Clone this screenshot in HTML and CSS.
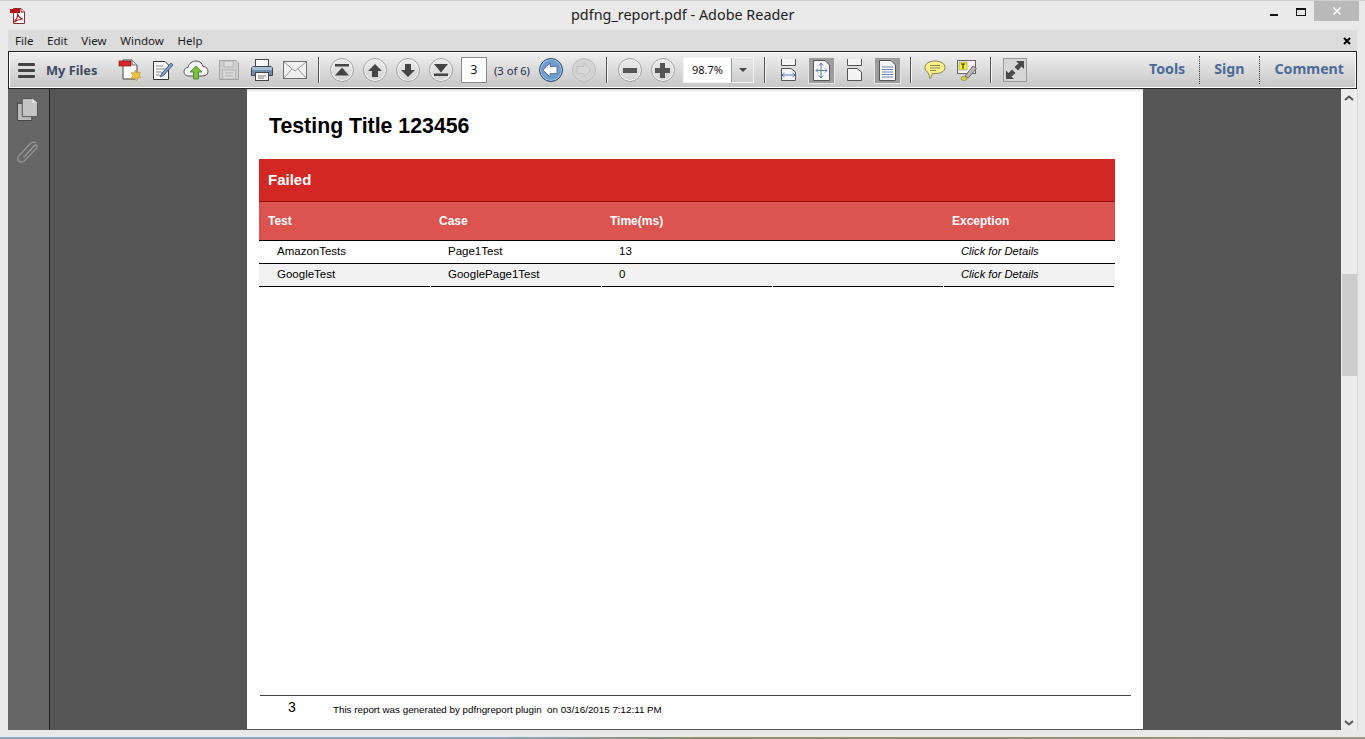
FILE: index.html
```html
<!DOCTYPE html>
<html lang="en">

<head>
  <meta charset="UTF-8">
  <title>pdfng_report.pdf - Adobe Reader</title>
  <link rel="stylesheet" href="styles.css">
</head>

<body>
  <div class="window">
    <div class="titlebar">
      <svg class="app-icon" width="18" height="18" viewBox="0 0 18 18">
        <path d="M4.500 1.500H12L15.500 5V16.500H4.500Z" fill="#fff" stroke="#8c2a2c" />
        <path d="M12 1.500V5H15.500" fill="#eee" stroke="#8c2a2c" />
        <rect x="1" y="2" width="10" height="4" fill="#b3151b" />
        <path d="M5 15C8 12 9 9 8.500 6.500C9.500 10 11 11.500 14 12C11 12 8 13 5 15Z" fill="none" stroke="#c2272d" stroke-width="1.200" />
      </svg>
      <div class="title">pdfng_report.pdf - Adobe Reader</div>
      <div class="winbtns">
        <svg width="10" height="3" viewBox="0 0 10 3" class="win-min"><rect width="8" height="2" y="1" fill="#111" /></svg>
        <svg width="11" height="9" viewBox="0 0 11 9" class="win-max"><rect x=".5" y=".5" width="9" height="7" fill="none" stroke="#111" /><rect x="0" y="0" width="10" height="2" fill="#111" /></svg>
        <div class="win-close">
          <svg width="10" height="10" viewBox="0 0 10 10"><path d="M1.500 1.500L8.500 8.500M8.500 1.500L1.500 8.500" stroke="#fff" stroke-width="1.600" /></svg>
        </div>
      </div>
    </div>

    <div class="menubar">
      <span>File</span>
      <span>Edit</span>
      <span>View</span>
      <span>Window</span>
      <span>Help</span>
      <svg class="menu-close" width="8" height="8" viewBox="0 0 8 8"><path d="M1 1L7 7M7 1L1 7" stroke="#000" stroke-width="2" /></svg>
    </div>

    <div class="toolbar">
      <svg class="burger" width="17" height="16" viewBox="0 0 17 16">
        <rect y="1" width="17" height="3" rx="1" fill="#444" />
        <rect y="7" width="17" height="3" rx="1" fill="#444" />
        <rect y="13" width="17" height="3" rx="1" fill="#444" />
      </svg>
      <div class="myfiles">My Files</div>

      <div class="group">
        <div class="tool">
          <svg width="24" height="26" viewBox="0 0 24 26">
            <path d="M5 3H14L19 8V22H5Z" fill="#fafafa" stroke="#444" />
            <path d="M14 3V8H19" fill="#ddd" stroke="#777" />
            <rect x="1" y="4" width="12" height="5" fill="#d8252b" stroke="#8a1a1e" stroke-width=".7" />
            <path d="M17.500 13L19 16L22.500 15L21 18L23 20.500L20 20.500L18.500 24L16.500 21L13 21.500L15 18.500L13 15.500L16 16Z" fill="#f0c23c" stroke="#b8902a" stroke-width=".6" />
          </svg>
        </div>
        <div class="tool">
          <svg width="22" height="24" viewBox="0 0 22 24">
            <path d="M1.500 3.500H13L16.500 7V21.500H1.500Z" fill="#fbfbfb" stroke="#333" />
            <path d="M4 8H11M4 11H13M4 14H10M4 17H8" stroke="#888" />
            <path d="M8 19L10 15L19 5L21 7L12 17Z" fill="#7d9bc4" stroke="#35517a" stroke-width=".8" />
          </svg>
        </div>
        <div class="tool">
          <svg width="26" height="22" viewBox="0 0 26 22">
            <path d="M6 17C2 17 1 14.500 1 12.500C1 10 3 8.500 5 8.500C6 4 9.500 2 13 2C17 2 19.500 4.500 20 7.500C23 7.500 25 9.500 25 12.500C25 15 23 17 20 17Z" fill="#f2f2f2" stroke="#555" />
            <path d="M13 7L19 13H15.500V20H10.500V13H7Z" fill="#7cc242" stroke="#3f7d1c" stroke-width=".8" />
          </svg>
        </div>
        <div class="tool">
          <svg width="20" height="20" viewBox="0 0 20 20">
            <path d="M.5 .5H17L19.500 3V19.500H.5Z" fill="#cfcfcf" stroke="#a2a2a2" />
            <rect x="5" y="1" width="9" height="6" fill="#dcdcdc" stroke="#a8a8a8" stroke-width=".7" />
            <rect x="3.500" y="10" width="13" height="9" fill="#d8d8d8" stroke="#a8a8a8" stroke-width=".7" />
            <path d="M6 13H14M6 16H14" stroke="#b0b0b0" />
          </svg>
        </div>
        <div class="tool">
          <svg width="24" height="24" viewBox="0 0 24 24">
            <rect x="5.500" y="1.500" width="13" height="8" fill="#fafafa" stroke="#444" />
            <path d="M1.500 11C1.500 9 3 8.500 4 8.500H20C21.500 8.500 22.500 9 22.500 11V17.500H1.500Z" fill="#6e8cab" stroke="#444" />
            <rect x="2" y="9" width="20" height="3" fill="#a6bed6" />
            <rect x="5.500" y="14.500" width="13" height="8" fill="#fafafa" stroke="#444" />
            <path d="M8 18H16M8 20H14" stroke="#777" />
          </svg>
        </div>
        <div class="tool">
          <svg width="24" height="18" viewBox="0 0 24 18">
            <rect x=".5" y=".5" width="23" height="17" fill="#f0f0f0" stroke="#707070" />
            <path d="M1 1L12 10L23 1M1 17L9 8M23 17L15 8" fill="none" stroke="#999" />
          </svg>
        </div>
      </div>

      <div class="sep sep-a"></div>

      <div class="group">
        <div class="tool"><span class="round">
          <svg width="14" height="12" viewBox="0 0 14 12"><rect y="0" width="14" height="2.500" fill="#444" /><path d="M7 3.500L14 11.500H0Z" fill="#444" /></svg>
        </span></div>
        <div class="tool"><span class="round">
          <svg width="14" height="13" viewBox="0 0 14 13"><path d="M7 0L14 7H10V13H4V7H0Z" fill="#444" /></svg>
        </span></div>
        <div class="tool"><span class="round">
          <svg width="14" height="13" viewBox="0 0 14 13"><path d="M7 13L14 6H10V0H4V6H0Z" fill="#444" /></svg>
        </span></div>
        <div class="tool"><span class="round">
          <svg width="14" height="12" viewBox="0 0 14 12"><path d="M7 8.500L14 0H0Z" fill="#444" /><rect y="9.500" width="14" height="2.500" fill="#444" /></svg>
        </span></div>
      </div>

      <div class="pagebox">3</div>
      <div class="pagecount">(3 of 6)</div>

      <div class="group group-history">
        <div class="tool"><span class="round round-blue">
          <svg width="15" height="14" viewBox="0 0 15 14"><path d="M0 7L7 0V3.500H14V10.500H7V14Z" fill="#fff" stroke="#2e4a70" stroke-width=".6" /></svg>
        </span></div>
        <div class="tool"><span class="round round-off">
          <svg width="15" height="14" viewBox="0 0 15 14"><path d="M15 7L8 0V3.500H1V10.500H8V14Z" fill="#d8d8d8" stroke="#b5b5b5" stroke-width=".6" /></svg>
        </span></div>
      </div>

      <div class="sep sep-b"></div>

      <div class="group">
        <div class="tool"><span class="round">
          <svg width="14" height="5" viewBox="0 0 14 5"><rect width="14" height="5" fill="#555" /></svg>
        </span></div>
        <div class="tool"><span class="round">
          <svg width="15" height="15" viewBox="0 0 15 15"><path d="M5 0H10V5H15V10H10V15H5V10H0V5H5Z" fill="#555" /></svg>
        </span></div>
      </div>

      <div class="zoombox">
        <div class="zoomval">98.7%</div>
        <div class="zoomdrop"><span class="caret"></span></div>
      </div>

      <div class="sep sep-c"></div>

      <div class="group">
        <div class="tool">
          <svg width="17" height="22" viewBox="0 0 17 22">
            <path d="M1.500 0V6.500H15.500V0" fill="#f4f4f4" stroke="#555" />
            <path d="M1.500 21.500V9.500H11L15.500 13V21.500Z" fill="#f4f4f4" stroke="#555" />
            <path d="M2 16H15M2 16L4.500 14M2 16L4.500 18M15 16L12.500 14M15 16L12.500 18" fill="none" stroke="#5f7fb0" />
          </svg>
        </div>
        <div class="tool"><span class="active">
          <svg width="17" height="21" viewBox="0 0 17 21">
            <path d="M.5 .5H12L16.500 5V20.500H.5Z" fill="#f6f6f6" stroke="#555" />
            <path d="M8 3V18M3 10.500H14M8 3L6 5.500M8 3L10 5.500M8 18L6 15.500M8 18L10 15.500M3 10.500L5 8.500M3 10.500L5 12.500M14 10.500L12 8.500M14 10.500L12 12.500" fill="none" stroke="#5f7fb0" />
          </svg>
        </span></div>
        <div class="tool">
          <svg width="17" height="22" viewBox="0 0 17 22">
            <path d="M1.500 0V6.500H15.500V0" fill="#f4f4f4" stroke="#555" />
            <path d="M1.500 21.500V9.500H11L15.500 13V21.500Z" fill="#f4f4f4" stroke="#555" />
          </svg>
        </div>
        <div class="tool"><span class="active">
          <svg width="17" height="21" viewBox="0 0 17 21">
            <path d="M.5 .5H12L16.500 5V20.500H.5Z" fill="#f6f6f6" stroke="#555" />
            <path d="M3 7H14M3 9.500H14M3 12H14M3 14.500H14M3 17H14" stroke="#6a86b8" />
          </svg>
        </span></div>
      </div>

      <div class="sep sep-d"></div>

      <div class="group">
        <div class="tool">
          <svg width="22" height="20" viewBox="0 0 22 20">
            <path d="M11 1C16.500 1 21 3.500 21 7.500C21 11.500 16.500 13.500 11 13.500C10 13.500 9 13.500 8 13.300C8 15 7.500 17 6 18.500C5.500 16.500 5 14.500 4 12.500C2 11.500 1 9.500 1 7.500C1 3.500 5.500 1 11 1Z" fill="#fbf08a" stroke="#8a8650" />
            <path d="M6 5.500H16M6 8H16M6 10.500H12" stroke="#8a8650" />
          </svg>
        </div>
        <div class="tool">
          <svg width="22" height="21" viewBox="0 0 22 21">
            <rect x=".5" y=".5" width="18" height="13" fill="#f4f4f4" stroke="#666" />
            <rect x="2" y="2" width="8" height="8" fill="#f7f12b" stroke="#777" stroke-width=".5" />
            <path d="M4 4H8M6 4V9" stroke="#222" />
            <path d="M8 16L16 6L19.500 8.500L11 18Z" fill="#b9b9b9" stroke="#666" />
            <ellipse cx="7" cy="18.500" rx="3" ry="2" fill="#d9cf4c" stroke="#827a22" stroke-width=".6" />
          </svg>
        </div>
      </div>

      <div class="sep sep-d"></div>

      <div class="tool">
        <span class="fullscreen">
          <svg width="20" height="20" viewBox="0 0 20 20">
            <path d="M11 1H19V9L16.500 6.500L13 10.500L9.500 7L13.500 3.500Z" fill="#4a4a4a" />
            <path d="M1 10.500L3.500 13L7 9.500L10.500 13L6.500 16.500L9 19H1Z" fill="#4a4a4a" />
          </svg>
        </span>
      </div>

      <div class="panels">
        <span class="panel-name panel-tools"><span class="panel-text">Tools</span></span>
        <span class="panel-name panel-sign"><span class="panel-text">Sign</span></span>
        <span class="panel-name panel-comment"><span class="panel-text">Comment</span></span>
      </div>
    </div>

    <div class="main">
      <div class="navpane">
        <svg width="21" height="23" viewBox="0 0 22 24">
          <rect x=".5" y="5.500" width="15" height="18" fill="#bdbdbd" stroke="#444" />
          <path d="M5.500 .5H16L21.500 5V19.500H5.500Z" fill="#c4c4c4" stroke="#505050" />
          <path d="M16 .5V5H21.500" fill="#e2e2e2" />
        </svg>
        <svg width="22" height="23" viewBox="0 0 23 24">
          <path d="M7 17L18 5C19.500 3.500 21 4 21 6C21 7 20.500 7.500 20 8L8 20.500C6 22.500 2.500 22.500 1.500 20.500C.5 18.500 1 16.500 2.500 15L13.500 3C15.500 1 18.500 .5 20 2" fill="none" stroke="#9a9a9a" stroke-width="1.300" />
        </svg>
      </div>

      <div class="canvas">
        <div class="page">
          <h1 class="doc-title">Testing Title 123456</h1>

          <table class="results">
            <colgroup>
              <col>
              <col>
              <col>
              <col>
              <col class="col-last">
            </colgroup>
            <thead>
              <tr class="band">
                <th colspan="5">Failed</th>
              </tr>
              <tr class="cols">
                <th>Test</th>
                <th>Case</th>
                <th>Time(ms)</th>
                <th></th>
                <th>Exception</th>
              </tr>
            </thead>
            <tbody>
              <tr>
                <td>AmazonTests</td>
                <td>Page1Test</td>
                <td>13</td>
                <td></td>
                <td class="details">Click for Details</td>
              </tr>
              <tr class="alt">
                <td>GoogleTest</td>
                <td>GooglePage1Test</td>
                <td>0</td>
                <td></td>
                <td class="details">Click for Details</td>
              </tr>
            </tbody>
          </table>

          <div class="doc-footer">
            <span class="page-no">3</span>
            <span class="generated">This report was generated by pdfngreport plugin&nbsp; on 03/16/2015 7:12:11 PM</span>
          </div>
        </div>
      </div>

      <div class="scrollbar">
        <svg width="10" height="6" viewBox="0 0 10 6"><path d="M1 5L5 1.500L9 5" fill="none" stroke="#555" stroke-width="2" /></svg>
        <div class="thumb"></div>
        <svg class="arrow-down" width="10" height="6" viewBox="0 0 10 6"><path d="M1 1L5 4.500L9 1" fill="none" stroke="#555" stroke-width="2" /></svg>
      </div>
    </div>

    <div class="statusgap"></div>
    <div class="desktop"></div>
  </div>
</body>

</html>
```

FILE: styles.css
```css
* {
  box-sizing: border-box;
}

body {
  margin: 0;
  overflow: hidden;
  font-family: "Noto Sans", "Liberation Sans", sans-serif;
}

.window {
  display: flex;
  flex-direction: column;
  height: 739px;
  background: #e9e9e9;
}

/* title bar */
.titlebar {
  display: flex;
  align-items: flex-start;
  height: 30px;
  border-top: 1px solid #cfcfcf;
}

.app-icon {
  margin: 6px 0 0 9px;
}

.title {
  flex: 1;
  padding: 4px 0 0 544px;
  font-size: 14.4px;
  line-height: 20px;
  color: #222;
}

.winbtns {
  display: flex;
  align-items: flex-start;
  margin-right: 6px;
}

.win-min {
  margin-top: 12px;
}

.win-max {
  margin: 7px 7px 0 16px;
}

.win-close {
  display: flex;
  align-items: center;
  justify-content: center;
  width: 45px;
  height: 20px;
  background: #b9b9b9;
}

/* menu */
.menubar {
  display: flex;
  align-items: center;
  gap: 13.7px;
  height: 21px;
  margin: 0 8px;
  padding: 0 6px 0 7px;
  background: #dcdcdc;
  font-size: 11.5px;
  color: #1b1b1b;
}

.menu-close {
  margin-left: auto;
}

/* toolbar */
.toolbar {
  display: flex;
  align-items: center;
  height: 38px;
  margin: 0 8px;
  padding-right: 12px;
  border: 1px solid #222;
  box-shadow: inset 0 0 0 1px #fff;
  background: linear-gradient(#f0f0f0, #c6c6c6);
}

.burger {
  margin-left: 9px;
}

.myfiles {
  width: 78px;
  padding-left: 11px;
  font-size: 12.8px;
  font-weight: 700;
  color: #3d4a63;
  white-space: nowrap;
}

.group {
  display: flex;
}

.group-history {
  margin-left: 3px;
}

.tool {
  display: flex;
  align-items: center;
  justify-content: center;
  width: 33px;
  height: 28px;
}

.round {
  display: flex;
  align-items: center;
  justify-content: center;
  width: 24px;
  height: 24px;
  border: 1px solid #a4a4a4;
  border-radius: 50%;
  background: linear-gradient(#ededed, #d2d2d2);
  box-shadow: inset 0 0 0 1px #f4f4f4;
}

.round-blue {
  border-color: #2e4a70;
  background: #6f9bcf;
  box-shadow: inset 0 0 0 1px #a5c4e6;
}

.round-off {
  background: #d4d4d4;
  border-color: #bcbcbc;
  box-shadow: none;
}

.active {
  display: flex;
  align-items: center;
  justify-content: center;
  width: 27px;
  height: 27px;
  border: 1px solid #e6e6e6;
  background: #9d9d9d;
}

.fullscreen {
  display: flex;
  align-items: center;
  justify-content: center;
  width: 24px;
  height: 24px;
  border: 1px solid #9a9a9a;
  background: #d6d6d6;
}

.sep {
  width: 2px;
  height: 26px;
  border-left: 1px solid #555;
  border-right: 1px solid #f4f4f4;
}

.sep-a {
  margin: 0 5px 0 7px;
}

.sep-b {
  margin: 0 5px 0 6px;
}

.sep-c {
  margin: 0 6px 0 10px;
}

.sep-d {
  margin: 0 6px;
}

.pagebox {
  width: 26px;
  height: 26px;
  margin-left: 4px;
  border: 1px solid #8a8a8a;
  background: #fff;
  font-size: 12px;
  line-height: 24px;
  text-align: center;
  color: #111;
}

.pagecount {
  width: 37px;
  margin-left: 7px;
  font-size: 11.2px;
  color: #1d2a44;
  white-space: nowrap;
}

.zoombox {
  display: flex;
  width: 71px;
  height: 26px;
  margin-left: 4px;
  border: 1px solid #f2f2f2;
}

.zoomval {
  width: 48px;
  background: #fff;
  border-right: 1px solid #999;
  font-size: 11px;
  line-height: 24px;
  text-align: center;
  color: #111;
}

.zoomdrop {
  display: flex;
  flex: 1;
  align-items: center;
  justify-content: center;
}

.caret {
  border-top: 4px solid #444;
  border-left: 4px solid transparent;
  border-right: 4px solid transparent;
}

.panels {
  display: flex;
  align-items: center;
  margin-left: auto;
  height: 28px;
  font-size: 14.2px;
  font-weight: 700;
  color: #4a6b98;
}

.panel-name {
  display: flex;
  align-items: center;
  height: 28px;
}

.panel-text {
  margin-top: -3px;
}

.panel-tools {
  padding-right: 14px;
}

.panel-sign {
  padding: 0 14px 0 14px;
  border-left: 1px dotted #333;
}

.panel-comment {
  padding-left: 15px;
  border-left: 1px dotted #333;
}

/* document area */
.main {
  display: flex;
  flex: 1;
  margin: 0 7px 0 8px;
}

.navpane {
  display: flex;
  flex-direction: column;
  align-items: center;
  gap: 20px;
  width: 42px;
  padding: 9px 2px 0 0;
  background: #666;
  border-right: 1px solid #222;
}

.canvas {
  display: flex;
  flex: 1;
  justify-content: center;
  padding: 0 1px 1px 0;
  background: #555;
}

.page {
  display: flex;
  flex-direction: column;
  width: 896px;
  padding-left: 12px;
  background: #fff;
  box-shadow: inset 0 3px 3px -2px #c8c8c8;
  color: #000;
  font-family: "Liberation Sans", Arial, sans-serif;
}

.doc-title {
  margin: 25px 0 20px 10px;
  font-size: 21.3px;
  line-height: 25px;
  font-weight: 700;
}

.results {
  width: 856px;
  table-layout: fixed;
  border-spacing: 0;
  font-size: 11.5px;
}

.results col {
  width: 171px;
}

.results .col-last {
  width: 172px;
}

.band th {
  height: 43px;
  padding: 0 0 2px 9px;
  background: #d32723;
  border-bottom: 1px solid #970f0f;
  font-size: 15px;
  text-align: left;
  color: #fff;
}

.cols th {
  height: 39px;
  padding-left: 9px;
  background: #db5450;
  border-bottom: 1px solid #000;
  font-size: 12px;
  text-align: left;
  color: #fff;
}

.results td {
  height: 23px;
  padding: 0 0 2px 18px;
  border-bottom: 1px solid #000;
}

.results .details {
  font-size: 11.2px;
  font-style: italic;
}

.alt {
  background: #f2f2f2;
}

/* the bottom rule is broken by a white pixel at each column edge */
.results .alt td {
  padding-bottom: 3px;
  border-bottom: 0;
  background-image: linear-gradient(#000, #000);
  background-size: 170px 1px;
  background-position: right bottom;
  background-repeat: no-repeat;
}

.results .alt td:first-child {
  background-size: 171px 1px;
}

.results .alt td:last-child {
  background-position: 1px 100%;
}

.doc-footer {
  display: flex;
  align-items: center;
  width: 871px;
  height: 34px;
  margin: auto 0 0 1px;
  padding-bottom: 12px;
  border-top: 1px solid #444;
}

.page-no {
  width: 73px;
  padding-left: 28px;
  font-size: 14px;
}

.generated {
  padding-top: 6px;
  font-size: 9.8px;
}

.scrollbar {
  display: flex;
  flex-direction: column;
  align-items: center;
  width: 17px;
  padding: 6px 0 4px;
  background: #ececec;
  border-right: 1px solid #d8d8d8;
}

.thumb {
  width: 15px;
  height: 102px;
  margin-top: 173px;
  background: #cdcdcd;
}

.arrow-down {
  margin-top: auto;
}

.statusgap {
  height: 7px;
}

.desktop {
  height: 2px;
  background: linear-gradient(90deg, #8ea6bd 0, #8ea6bd 500px, #8c8f68 700px, #9a9a88 1365px);
}
```
